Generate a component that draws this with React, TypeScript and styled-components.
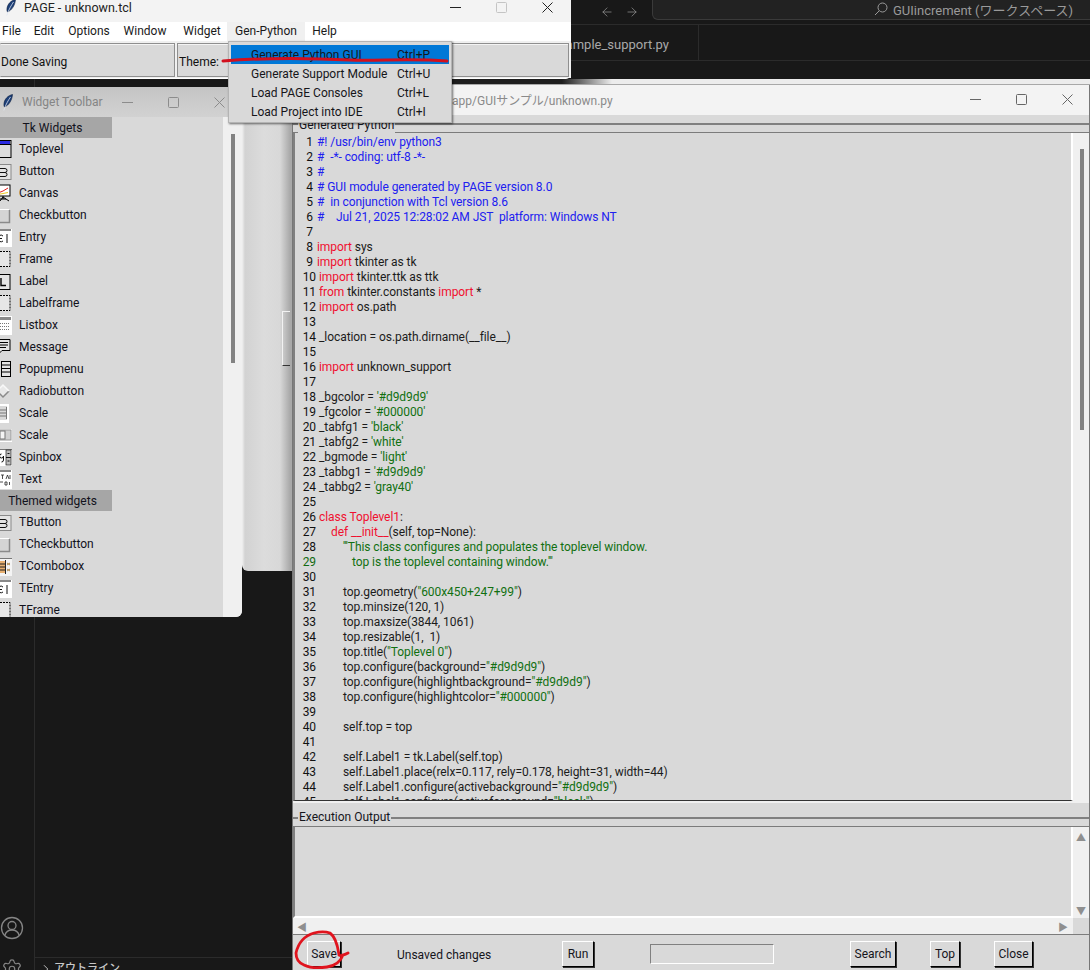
import React from "react";
import styled, { createGlobalStyle } from "styled-components";
import { ArrowLeft, ArrowRight, ChevronRight, Settings } from "lucide-react";

const UI_FONT = `Roboto, "Noto Sans CJK JP", sans-serif`;

const GlobalStyle = createGlobalStyle`
    html, body {
        margin: 0;
        padding: 0;
        background: #181818;
        overflow: hidden;
    }
    * {
        box-sizing: border-box;
    }
`;

const Desktop = styled.div`
    position: relative;
    width: 1090px;
    height: 970px;
    overflow: hidden;
    background: #181818;
    font-family: ${UI_FONT};
    font-size: 12px;
    color: #111;
`;

/* vs code behind the tk windows */
const EditorTop = styled.div`
    height: 25px;
    display: flex;
    align-items: center;
    padding-left: 600px;
    border-bottom: 1px solid #2b2b2b;
    color: #9a9a9a;
`;

const NavArrows = styled.div`
    display: flex;
    gap: 11px;
    width: 52px;
    flex-shrink: 0;
`;

const SearchBox = styled.div`
    width: 460px;
    height: 20px;
    margin-top: -5px;
    flex-shrink: 0;
    display: flex;
    align-items: center;
    padding-left: 221px;
    gap: 5px;
    background: #222;
    border: 1px solid #3a3a3a;
    border-top: none;
    border-radius: 0 0 0 6px;
    color: #9a9a9a;
    font-size: 13px;
    white-space: nowrap;
`;

const TabStrip = styled.div`
    height: 36px;
    border-bottom: 1px solid #2b2b2b;
    display: flex;
    justify-content: flex-end;
    width: 1090px;
    padding-right: 391px;
`;

const EditorTab = styled.div`
    width: 170px;
    height: 35px;
    line-height: 40px;
    padding-right: 29px;
    text-align: right;
    border-right: 1px solid #2b2b2b;
    color: #a8a8a8;
    font-size: 13px;
    white-space: nowrap;
    overflow: hidden;
`;

const ActivityLine = styled.div`
    position: absolute;
    left: 34px;
    top: 60px;
    bottom: 0;
    width: 1px;
    background: #2b2b2b;
`;

const AccountIcon = styled.div`
    position: absolute;
    left: 0;
    top: 916px;
    color: #858585;
`;

const GearIcon = styled.div`
    position: absolute;
    left: 1px;
    top: 958px;
    color: #858585;
`;

const OutlineBar = styled.div`
    position: absolute;
    left: 35px;
    top: 957px;
    width: 258px;
    height: 13px;
    display: flex;
    gap: 1px;
    align-items: flex-start;
    padding: 4px 0 0 4px;
    border-top: 1px solid #2b2b2b;
    color: #c8c8c8;
    font-size: 11px;
    font-weight: 500;
    line-height: 14px;
    white-space: nowrap;
`;

/* window chrome, all tk windows share these */
const ControlsRow = styled.div<{ $gap: number; $color: string }>`
    display: flex;
    align-items: center;
    gap: ${(p) => p.$gap}px;
    color: ${(p) => p.$color};
`;

const WinControls = ({ gap, color, maxColor }: { gap: number; color: string; maxColor?: string }) => (
    <ControlsRow $gap={gap} $color={color}>
        <svg width="11" height="11" viewBox="0 0 11 11">
            <path d="M0 5.5h11" stroke="currentColor" fill="none" />
        </svg>
        <svg width="11" height="11" viewBox="0 0 11 11">
            <rect x="0.5" y="0.5" width="10" height="10" rx="1" stroke={maxColor ?? "currentColor"} fill="none" />
        </svg>
        <svg width="11" height="11" viewBox="0 0 11 11">
            <path d="M0.5 0.5l10 10M10.5 0.5l-10 10" stroke="currentColor" fill="none" />
        </svg>
    </ControlsRow>
);

const Feather = () => (
    <svg width="10" height="17" viewBox="0 0 10 17">
        <path d="M9.500 0.500C5 1.500 1.500 5 1 9.500c-.2 1.600 0 2.800.5 3.500C5.500 11.500 9 6.500 9.500 0.500z" fill="#1d3f78" stroke="#0c1c3c" strokeWidth="0.6" />
        <path d="M7.500 3C5.500 6 3 10 0.800 16.500" stroke="#dfe7f3" strokeWidth="0.8" fill="none" />
    </svg>
);

/* PAGE main window */
const PageWindow = styled.div`
    position: absolute;
    left: 0;
    top: 0;
    width: 571px;
    height: 79px;
    background: #fff;
    border-radius: 0 0 5px 0;
    z-index: 4;
`;

const PageTitleBar = styled.div`
    height: 22px;
    display: flex;
    align-items: center;
    padding: 0 18px 7px 6px;
    background: #f3f3f3;
    font-size: 12.5px;
`;

const PageTitle = styled.span`
    flex: 1;
    margin-left: 8px;
    color: #222;
`;

const MenuBar = styled.div`
    height: 19px;
    display: flex;
    align-items: center;
    background: #fff;
`;

const MenuItem = styled.div<{ $active?: boolean; $w: number }>`
    width: ${(p) => p.$w}px;
    height: 19px;
    line-height: 19px;
    text-align: center;
    background: ${(p) => (p.$active ? "#f0f0f0" : "transparent")};
    color: #1a1a1a;
    white-space: nowrap;
`;

const ToolRow = styled.div`
    height: 37px;
    padding-top: 2px;
    display: flex;
    gap: 2px;
    background: #f0f0f0;
    padding-right: 2px;
`;

const ToolCell = styled.div<{ $w?: number }>`
    ${(p) => (p.$w ? `width: ${p.$w}px;` : "flex: 1;")}
    height: 34px;
    line-height: 36px;
    padding-left: ${(p) => (p.$w ? 0 : 1)}px;
    background: #d9d9d9;
    border: 1px solid #8f8f8f;
    border-left-color: ${(p) => (p.$w ? "transparent" : "#8f8f8f")};
    box-shadow: inset 0 1px 0 #f4f4f4;
    white-space: nowrap;
    overflow: hidden;
`;

const DropMenu = styled.div`
    position: absolute;
    left: 228px;
    top: 41px;
    width: 224px;
    height: 82px;
    padding: 3px 2px;
    background: #d9d9d9;
    border: 1px solid #b4b4b4;
    box-shadow: 1px 1px 2px rgba(0, 0, 0, 0.55);
`;

const DropItem = styled.div<{ $active?: boolean }>`
    height: 19px;
    display: flex;
    align-items: center;
    padding-left: 20px;
    background: ${(p) => (p.$active ? "#0078d7" : "transparent")};
    color: #16161a;
    white-space: nowrap;
`;

const DropLabel = styled.span`
    width: 146px;
`;

const RedStroke = styled.svg`
    position: absolute;
    left: 220px;
    top: 55px;
    z-index: 6;
`;

/* widget toolbar */
const ToolbarWindow = styled.div`
    position: absolute;
    left: 0;
    top: 87px;
    width: 242px;
    height: 530px;
    display: flex;
    flex-direction: column;
    overflow: hidden;
    background: #d9d9d9;
    border-radius: 0 0 6px 0;
    z-index: 3;
`;

const ToolbarTitle = styled.div`
    height: 30px;
    flex-shrink: 0;
    display: flex;
    align-items: center;
    padding: 0 17px 0 3px;
    background: linear-gradient(#c4c4c4, #d2d2d2);
    color: #858585;
`;

const ToolbarName = styled.span`
    flex: 1;
    margin-left: 9px;
`;

const ToolbarBody = styled.div`
    flex: 1;
    display: flex;
    overflow: hidden;
`;

const WidgetList = styled.div`
    width: 223px;
    height: 520px;
`;

const ListHeading = styled.div`
    width: 112px;
    height: 21px;
    padding-right: 7px;
    line-height: 23px;
    text-align: center;
    background: #a6a6a6;
    color: #12121c;
`;

const WidgetRow = styled.div`
    height: 22px;
    display: flex;
    align-items: center;
    gap: 7px;
    color: #12121c;
`;

const ToolbarScroll = styled.div`
    width: 19px;
    padding: 17px 0 0 8px;
    background: #f0f0f0;
`;

const VThumb = styled.div<{ $h: number; $mt?: number }>`
    width: 4px;
    height: ${(p) => p.$h}px;
    margin-top: ${(p) => p.$mt ?? 0}px;
    background: #828282;
`;

type IconKind =
    | "toplevel" | "button" | "canvas" | "check" | "entry" | "frame" | "label" | "listbox"
    | "message" | "popup" | "radio" | "vscale" | "hscale" | "spin" | "text" | "combo";

const WidgetIcon = ({ kind }: { kind: IconKind }) => {
    const dash = { stroke: "#000", fill: "#e6e6e6", strokeDasharray: "2 1" };
    return (
        <svg width="12" height="22" viewBox="0 0 12 22" style={{ flexShrink: 0 }}>
            {kind === "toplevel" && (
                <>
                    <rect x="-3" y="2.5" width="14" height="17" fill="#dcdcdc" stroke="#000" />
                    <rect x="-3" y="3" width="13" height="3" fill="#2a2ae0" />
                    <path d="M-3 6.5h14" stroke="#000" />
                </>
            )}
            {kind === "button" && (
                <>
                    <rect x="-3" y="4.5" width="14" height="15" fill="#e4e4e4" stroke="#8a8a8a" />
                    <path d="M0 8.500h5a1.500 1.500 0 0 1 0 4H0m5 0a1.500 1.500 0 0 1 0 4H0" stroke="#111" fill="none" />
                </>
            )}
            {kind === "canvas" && (
                <>
                    <rect x="-3" y="3" width="13" height="11" fill="#fff" stroke="#000" />
                    <path d="M-2 11l5-2 5-3" stroke="#e02020" fill="none" />
                    <path d="M-2 12.500l10-2" stroke="#e8c820" fill="none" />
                    <path d="M3 14v3M3 15l-3 4M3 15l6 4M0 17h6" stroke="#000" fill="none" />
                </>
            )}
            {kind === "check" && (
                <>
                    <rect x="-3" y="6" width="12" height="12" fill="#d4d4d4" />
                    <path d="M-3 5.500h12" stroke="#fff" />
                    <path d="M9.500 6v12.500H-3" stroke="#8a8a8a" strokeWidth="1.5" fill="none" />
                </>
            )}
            {kind === "entry" && (
                <>
                    <rect x="-3" y="3" width="15" height="18" fill="#fff" />
                    <path d="M-3 4h14" stroke="#888" strokeWidth="2" />
                    <path d="M-2 12.500h4M3 10a3 3 0 0 0-5 3 3 3 0 0 0 5 2" stroke="#111" fill="none" />
                    <path d="M7 8v9" stroke="#111" />
                </>
            )}
            {kind === "frame" && <rect x="-3" y="3.5" width="13" height="15" {...dash} />}
            {kind === "label" && (
                <>
                    <rect x="-3" y="4.5" width="13" height="15" fill="#e4e4e4" stroke="#000" />
                    <path d="M1 8v7.500h5" stroke="#000" strokeWidth="1.4" fill="none" />
                </>
            )}
            {kind === "listbox" && (
                <>
                    <rect x="-3" y="2" width="15" height="19" fill="#fff" />
                    <rect x="-3" y="3" width="14" height="3" fill="#8a8a8a" />
                    <path d="M-2 9.500h12M-2 12.500h12M-2 15.500h12" stroke="#777" strokeDasharray="1 1" />
                </>
            )}
            {kind === "message" && (
                <>
                    <path d="M-3 3.500h13v11H2l-4 4v-4h-1z" fill="#e4e4e4" stroke="#000" />
                    <path d="M0 6.500h8M0 9h8M0 11.500h6" stroke="#000" />
                </>
            )}
            {kind === "popup" && (
                <>
                    <rect x="1.5" y="3.5" width="9" height="15" fill="#e4e4e4" stroke="#000" />
                    <path d="M1 7h9M1 10.500h9M1 14h9" stroke="#000" />
                </>
            )}
            {kind === "radio" && (
                <>
                    <path d="M-3 11l6-6 6 6-6 6z" fill="#e8e8e8" />
                    <path d="M-3 11l6 6 6-6" fill="none" stroke="#8a8a8a" strokeWidth="1.5" />
                    <path d="M-3 11l6-6 6 6" fill="none" stroke="#f8f8f8" strokeWidth="1.5" />
                </>
            )}
            {kind === "vscale" && (
                <>
                    <rect x="-3" y="2" width="12" height="19" fill="#fff" />
                    <rect x="-3" y="4" width="10" height="14" fill="#d8d8d8" />
                    <path d="M-1 8h7M-1 11h7M-1 14h7M6.500 5v12" stroke="#777" fill="none" />
                </>
            )}
            {kind === "hscale" && (
                <>
                    <rect x="-3" y="5" width="15" height="13" fill="#fff" />
                    <rect x="-3" y="6" width="14" height="10" fill="#d0d0d0" stroke="#999" />
                    <rect x="0" y="7" width="5" height="8" fill="#f4f4f4" stroke="#777" />
                </>
            )}
            {kind === "spin" && (
                <>
                    <rect x="-3" y="3" width="15" height="17" fill="#fff" />
                    <path d="M-3 3.500h15" stroke="#777" />
                    <path d="M1.500 8a2 2 0 1 0 0 4 2 2 0 0 0 2-2v4a2 2 0 0 1-2 2" stroke="#111" fill="none" />
                    <rect x="6" y="4" width="5" height="15" fill="#bdbdbd" stroke="#222" strokeWidth="0.7" />
                    <path d="M6 11.500h5M7.500 7.500h2M7.500 15h2" stroke="#111" />
                </>
            )}
            {kind === "text" && (
                <>
                    <rect x="-3" y="2" width="15" height="19" fill="#fff" />
                    <path d="M-3 3h14" stroke="#888" strokeWidth="2" />
                    <path d="M1 7h3M2.500 7v4M6 11l1.500-4L9 11M10 7v4M0 14h3M5 14h2v3H5zM9.500 14v3" stroke="#222" fill="none" strokeWidth="0.8" />
                </>
            )}
            {kind === "combo" && (
                <>
                    <rect x="-3" y="3" width="15" height="18" fill="#f4f4f4" />
                    <path d="M-3 3.500h15" stroke="#777" />
                    <rect x="-3" y="6" width="8" height="12" fill="#e8b070" />
                    <path d="M-3 9h8M-3 12h8M-3 15h8" stroke="#222" />
                    <path d="M5.500 5v14" stroke="#222" />
                    <path d="M7 8l3 2M10 8l-3 2M7 14l3 2M10 14l-3 2" stroke="#b08a50" />
                </>
            )}
        </svg>
    );
};

const TK_WIDGETS: [IconKind, string][] = [
    ["toplevel", "Toplevel"],
    ["button", "Button"],
    ["canvas", "Canvas"],
    ["check", "Checkbutton"],
    ["entry", "Entry"],
    ["frame", "Frame"],
    ["label", "Label"],
    ["frame", "Labelframe"],
    ["listbox", "Listbox"],
    ["message", "Message"],
    ["popup", "Popupmenu"],
    ["radio", "Radiobutton"],
    ["vscale", "Scale"],
    ["hscale", "Scale"],
    ["spin", "Spinbox"],
    ["text", "Text"],
];

const THEMED_WIDGETS: [IconKind, string][] = [
    ["button", "TButton"],
    ["check", "TCheckbutton"],
    ["combo", "TCombobox"],
    ["entry", "TEntry"],
    ["frame", "TFrame"],
];

/* the window left behind the code window */
const BackWindow = styled.div`
    position: absolute;
    left: 242px;
    top: 117px;
    width: 50px;
    height: 454px;
    background: linear-gradient(90deg, #f0f0f0 0, #d2d2d2 3px, #dcdcdc 22px, #d8d8d8 38px, #a9a9a9 48px);
    border-radius: 0 0 0 6px;
    z-index: 1;
    display: flex;
    justify-content: flex-end;
    padding: 194px 2px 0 0;
`;

const BackSlot = styled.div`
    width: 8px;
    height: 55px;
    border: 1px solid #f2f2f2;
    border-right: none;
    border-bottom-color: #333;
`;

/* code window */
const CodeWindow = styled.div`
    position: absolute;
    left: 292px;
    top: 79px;
    width: 798px;
    height: 891px;
    display: flex;
    flex-direction: column;
    z-index: 2;
    background: #d9d9d9;
    border-left: 1px solid #777;
    border-right: 1px solid #777;
`;

const CodeWindowEdge = styled.div`
    height: 6px;
    flex-shrink: 0;
    background: linear-gradient(90deg, #1e1e1e 0, #1e1e1e 270px, #ececec 320px);
    border-bottom: 1px solid #a8a8a8;
    margin: 0 -1px;
`;

const CodeTitleBar = styled.div`
    height: 30px;
    flex-shrink: 0;
    display: flex;
    align-items: center;
    padding: 0 16px 2px 159px;
    background: #f3f3f3;
    color: #8a8a8a;
`;

const CodeTitle = styled.span`
    flex: 1;
`;

const GroupFrame = styled.div<{ $h: number; $mt: number }>`
    position: relative;
    height: ${(p) => p.$h}px;
    margin-top: ${(p) => p.$mt}px;
    flex-shrink: 0;
    display: flex;
    flex-direction: column;
    border-top: 2px solid #808080;
    padding-top: 7px;
`;

const GroupLegend = styled.span<{ $top: number }>`
    position: absolute;
    left: 5px;
    top: ${(p) => p.$top}px;
    padding: 0 1px;
    background: #d9d9d9;
    color: #15151c;
    line-height: 16px;
`;

const PaneRow = styled.div`
    flex: 1;
    display: flex;
    min-height: 0;
    border-top: 1px solid #7c7c7c;
    box-shadow: 0 2px 0 #f0f0f0;
`;

const CodeArea = styled.div`
    flex: 1;
    overflow: hidden;
    padding-top: 2px;
    border-left: 2px solid #808080;
    border-right: 2px solid #fff;
    border-bottom: 1px solid #333;
    font-size: 12px;
    line-height: 15px;
    letter-spacing: -0.07px;
`;

const CodeLine = styled.div`
    display: flex;
    height: 15px;
    white-space: pre;
`;

const LineNo = styled.span<{ $wide: boolean; $tint?: boolean }>`
    width: ${(p) => (p.$wide ? 24 : 22)}px;
    padding-right: ${(p) => (p.$wide ? 3 : 4)}px;
    text-align: right;
    flex-shrink: 0;
    color: ${(p) => (p.$tint ? "#126a12" : "#111")};
`;

const CodeIndent = styled.span<{ $w: number }>`
    width: ${(p) => p.$w}px;
    flex-shrink: 0;
`;

const tokenColors = { n: "#1c1c1c", k: "#f01030", c: "#2020f0", s: "#117011" };
type Token = keyof typeof tokenColors;

const CodeToken = styled.span<{ $t: Token }>`
    color: ${(p) => tokenColors[p.$t]};
`;

const PaneScroll = styled.div`
    width: 16px;
    flex-shrink: 0;
    padding: 16px 0 0 7px;
    background: #f0f0f0;
`;

const ExecArea = styled.div`
    flex: 1;
    border-left: 2px solid #808080;
    border-right: 2px solid #fff;
    border-bottom: 2px solid #fff;
`;

const ExecScroll = styled.div`
    width: 16px;
    flex-shrink: 0;
    display: flex;
    flex-direction: column;
    justify-content: space-between;
    align-items: center;
    padding: 6px 0 1px;
    background: #f0f0f0;
    color: #8f8f8f;
    font-size: 10px;
    line-height: 10px;
`;

const HScroll = styled.div`
    height: 17px;
    flex-shrink: 0;
    display: flex;
    justify-content: space-between;
    align-items: center;
    padding: 0 21px 0 4px;
    background: #f0f0f0;
    border-bottom: 1px solid #7c7c7c;
    color: #8f8f8f;
    font-size: 10px;
    box-shadow: inset -16px 0 0 #d9d9d9;
`;

const ButtonBar = styled.div`
    flex: 1;
    display: flex;
    align-items: flex-start;
    padding-top: 6px;
`;

const TkButton = styled.div<{ $w: number; $ml: number }>`
    width: ${(p) => p.$w}px;
    height: 26px;
    margin-left: ${(p) => p.$ml}px;
    line-height: 24px;
    text-align: center;
    flex-shrink: 0;
    border: 1px solid;
    border-color: #fff #000 #000 #fff;
    box-shadow: 1px 1px 0 #333;
    color: #15151c;
`;

const StatusText = styled.span`
    width: 165px;
    margin-left: 56px;
    line-height: 28px;
    flex-shrink: 0;
    color: #15151c;
`;

const ProgressField = styled.div`
    width: 124px;
    height: 20px;
    margin-top: 3px;
    margin-left: 56px;
    flex-shrink: 0;
    border: 1px solid;
    border-color: #808080 #fff #fff #808080;
`;

const RedCircle = styled.svg`
    position: absolute;
    left: 290px;
    top: 926px;
    z-index: 6;
`;

const code: [Token, string][][] = [
    [["c", "#! /usr/bin/env python3"]],
    [["c", "#  -*- coding: utf-8 -*-"]],
    [["c", "#"]],
    [["c", "# GUI module generated by PAGE version 8.0"]],
    [["c", "#  in conjunction with Tcl version 8.6"]],
    [["c", "#    Jul 21, 2025 12:28:02 AM JST  platform: Windows NT"]],
    [],
    [["k", "import"], ["n", " sys"]],
    [["k", "import"], ["n", " tkinter as tk"]],
    [["k", "import"], ["n", " tkinter.ttk as ttk"]],
    [["k", "from"], ["n", " tkinter.constants "], ["k", "import"], ["n", " *"]],
    [["k", "import"], ["n", " os.path"]],
    [],
    [["n", "_location = os.path.dirname(__file__)"]],
    [],
    [["k", "import"], ["n", " unknown_support"]],
    [],
    [["n", "_bgcolor = "], ["s", "'#d9d9d9'"]],
    [["n", "_fgcolor = "], ["s", "'#000000'"]],
    [["n", "_tabfg1 = "], ["s", "'black'"]],
    [["n", "_tabfg2 = "], ["s", "'white'"]],
    [["n", "_bgmode = "], ["s", "'light'"]],
    [["n", "_tabbg1 = "], ["s", "'#d9d9d9'"]],
    [["n", "_tabbg2 = "], ["s", "'gray40'"]],
    [],
    [["k", "class Toplevel1"], ["n", ":"]],
    [["k", "def __init__"], ["n", "(self, top=None):"]],
    [["s", "'''This class configures and populates the toplevel window."]],
    [["s", "top is the toplevel containing window.'''"]],
    [],
    [["n", "top.geometry("], ["s", "\"600x450+247+99\""], ["n", ")"]],
    [["n", "top.minsize(120, 1)"]],
    [["n", "top.maxsize(3844, 1061)"]],
    [["n", "top.resizable(1,  1)"]],
    [["n", "top.title("], ["s", "\"Toplevel 0\""], ["n", ")"]],
    [["n", "top.configure(background="], ["s", "\"#d9d9d9\""], ["n", ")"]],
    [["n", "top.configure(highlightbackground="], ["s", "\"#d9d9d9\""], ["n", ")"]],
    [["n", "top.configure(highlightcolor="], ["s", "\"#000000\""], ["n", ")"]],
    [],
    [["n", "self.top = top"]],
    [],
    [["n", "self.Label1 = tk.Label(self.top)"]],
    [["n", "self.Label1.place(relx=0.117, rely=0.178, height=31, width=44)"]],
    [["n", "self.Label1.configure(activebackground="], ["s", "\"#d9d9d9\""], ["n", ")"]],
    [["n", "self.Label1.configure(activeforeground="], ["s", "\"black\""], ["n", ")"]],
];

// indent of a code line in px, the tk text widget shows real spaces here
const indentFor = (n: number) => {
    if (n === 27) return 12;
    if (n === 29) return 33;
    if (n >= 28) return 24;
    return 0;
};

const App = () => {
    return (
        <Desktop>
            <GlobalStyle />

            <EditorTop>
                <NavArrows>
                    <ArrowLeft size={14} strokeWidth={1.2} />
                    <ArrowRight size={14} strokeWidth={1.2} />
                </NavArrows>
                <SearchBox>
                    <svg width="14" height="14" viewBox="0 0 14 14">
                        <circle cx="8.5" cy="5.5" r="4.5" stroke="currentColor" fill="none" />
                        <path d="M5.2 8.8L1 13" stroke="currentColor" />
                    </svg>
                    GUIincrement (ワークスペース)
                </SearchBox>
            </EditorTop>
            <TabStrip>
                <EditorTab>example_support.py</EditorTab>
            </TabStrip>
            <ActivityLine />
            <AccountIcon>
                <svg width="24" height="24" viewBox="0 0 24 24">
                    <circle cx="12" cy="12" r="10.5" stroke="currentColor" strokeWidth="1.3" fill="none" />
                    <circle cx="12" cy="9.5" r="4" stroke="currentColor" strokeWidth="1.3" fill="none" />
                    <path d="M4.800 19.500c1-3.500 3.800-5.500 7.200-5.500s6.200 2 7.200 5.500" stroke="currentColor" strokeWidth="1.3" fill="none" />
                </svg>
            </AccountIcon>
            <GearIcon>
                <Settings size={22} strokeWidth={1.3} />
            </GearIcon>
            <OutlineBar>
                <ChevronRight size={14} strokeWidth={1.6} />
                アウトライン
            </OutlineBar>

            <PageWindow>
                <PageTitleBar>
                    <Feather />
                    <PageTitle>PAGE - unknown.tcl</PageTitle>
                    <WinControls gap={35} color="#222" maxColor="#c4c4c4" />
                </PageTitleBar>
                <MenuBar>
                    <MenuItem $w={23}>File</MenuItem>
                    <MenuItem $w={42}>Edit</MenuItem>
                    <MenuItem $w={48}>Options</MenuItem>
                    <MenuItem $w={64}>Window</MenuItem>
                    <MenuItem $w={50}>Widget</MenuItem>
                    <MenuItem $w={78} $active>Gen-Python</MenuItem>
                    <MenuItem $w={39}>Help</MenuItem>
                </MenuBar>
                <ToolRow>
                    <ToolCell $w={175}>Done Saving</ToolCell>
                    <ToolCell>Theme:</ToolCell>
                </ToolRow>
                <DropMenu>
                    <DropItem $active><DropLabel>Generate Python GUI</DropLabel>Ctrl+P</DropItem>
                    <DropItem><DropLabel>Generate Support Module</DropLabel>Ctrl+U</DropItem>
                    <DropItem><DropLabel>Load PAGE Consoles</DropLabel>Ctrl+L</DropItem>
                    <DropItem><DropLabel>Load Project into IDE</DropLabel>Ctrl+I</DropItem>
                </DropMenu>
            </PageWindow>
            <RedStroke width="232" height="10" viewBox="0 0 232 10">
                <path d="M3 6C40 3 90 3 130 5c30 1 60-2 97 1" stroke="#d2101e" strokeWidth="3" fill="none" strokeLinecap="round" />
            </RedStroke>

            <ToolbarWindow>
                <ToolbarTitle>
                    <Feather />
                    <ToolbarName>Widget Toolbar</ToolbarName>
                    <WinControls gap={35} color="#8c8c8c" />
                </ToolbarTitle>
                <ToolbarBody>
                    <WidgetList>
                        <ListHeading>Tk Widgets</ListHeading>
                        {TK_WIDGETS.map(([kind, name]) => (
                            <WidgetRow key={name + kind}>
                                <WidgetIcon kind={kind} />
                                {name}
                            </WidgetRow>
                        ))}
                        <ListHeading>Themed widgets</ListHeading>
                        {THEMED_WIDGETS.map(([kind, name]) => (
                            <WidgetRow key={name}>
                                <WidgetIcon kind={kind} />
                                {name}
                            </WidgetRow>
                        ))}
                    </WidgetList>
                    <ToolbarScroll>
                        <VThumb $h={229} />
                    </ToolbarScroll>
                </ToolbarBody>
            </ToolbarWindow>

            <BackWindow>
                <BackSlot />
            </BackWindow>

            <CodeWindow>
                <CodeWindowEdge />
                <CodeTitleBar>
                    <CodeTitle>app/GUIサンプル/unknown.py</CodeTitle>
                    <WinControls gap={35} color="#666" />
                </CodeTitleBar>
                <GroupFrame $h={678} $mt={8}>
                    <GroupLegend $top={-8}>Generated Python</GroupLegend>
                    <PaneRow>
                        <CodeArea>
                            {code.map((tokens, i) => {
                                const n = i + 1;
                                return (
                                    <CodeLine key={n}>
                                        <LineNo $wide={n > 9} $tint={n === 29}>{n}</LineNo>
                                        <CodeIndent $w={indentFor(n)} />
                                        {tokens.map(([t, text], j) => (
                                            <CodeToken key={j} $t={t}>{text}</CodeToken>
                                        ))}
                                    </CodeLine>
                                );
                            })}
                        </CodeArea>
                        <PaneScroll>
                            <VThumb $h={281} />
                        </PaneScroll>
                    </PaneRow>
                </GroupFrame>
                <GroupFrame $h={118} $mt={16}>
                    <GroupLegend $top={-10}>Execution Output</GroupLegend>
                    <PaneRow>
                        <ExecArea />
                        <ExecScroll>
                            <span>▲</span>
                            <span>▼</span>
                        </ExecScroll>
                    </PaneRow>
                    <HScroll>
                        <span>◀</span>
                        <span>▶</span>
                    </HScroll>
                </GroupFrame>
                <ButtonBar>
                    <TkButton $w={34} $ml={14}>Save</TkButton>
                    <StatusText>Unsaved changes</StatusText>
                    <TkButton $w={32} $ml={0}>Run</TkButton>
                    <ProgressField />
                    <TkButton $w={46} $ml={76}>Search</TkButton>
                    <TkButton $w={30} $ml={34}>Top</TkButton>
                    <TkButton $w={39} $ml={34}>Close</TkButton>
                </ButtonBar>
            </CodeWindow>
            <RedCircle width="64" height="44" viewBox="0 0 64 44">
                <path
                    d="M58 27C54 29 50 30 49 29C48 23 47 12 40 7C34 5 28 6 24 7C14 10 8 18 6 27C6 33 9 37 14 39C20 42 30 42 37 41C44 40 50 37 53 29"
                    stroke="#e0141e"
                    strokeWidth="2.8"
                    fill="none"
                    strokeLinecap="round"
                />
            </RedCircle>
        </Desktop>
    );
};

export default App;
